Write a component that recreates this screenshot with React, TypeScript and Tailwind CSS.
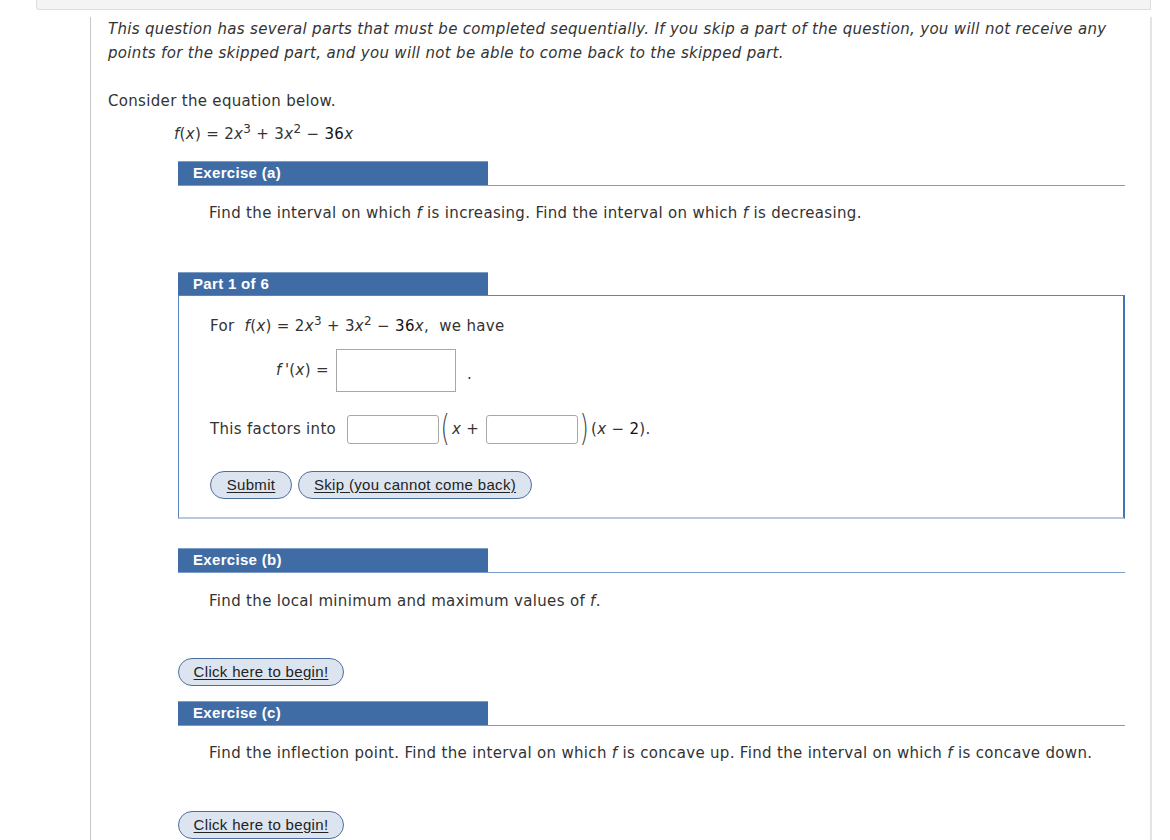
import type { ReactNode } from 'react';

const body = { fontFamily: '"DejaVu Sans", Verdana, sans-serif' };
const head = { fontFamily: '"Liberation Sans", Arial, sans-serif' };

function V({ children }: { children: ReactNode }) {
  return <i className="italic">{children}</i>;
}

function Sup({ children }: { children: ReactNode }) {
  return <sup className="text-[12px] relative -top-[6px]">{children}</sup>;
}

// f(x) = 2x^3 + 3x^2 − 36x
function Fx() {
  return (
    <span>
      <V>f</V>(<V>x</V>) = 2<V>x</V>
      <Sup>3</Sup> + 3<V>x</V>
      <Sup>2</Sup> − <span className="text-[#111]">36</span>
      <V>x</V>
    </span>
  );
}

function SectionBar({ title }: { title: string }) {
  return (
    <div className="flex items-end border-b border-[#7b9ccb]">
      <div
        className="w-[310px] h-[24px] bg-[#3f6ca5] border-t border-[#7d9cc6] text-white font-bold text-[15px] pl-[15px] leading-[22px]"
        style={head}
      >
        {title}
      </div>
    </div>
  );
}

function PillButton({ label, className = '' }: { label: string; className?: string }) {
  return (
    <button
      className={`h-[28px] rounded-full bg-[#dce5ef] border border-[#4d6f9d] text-[15px] text-[#222] underline underline-offset-2 ${className}`}
      style={head}
    >
      {label}
    </button>
  );
}

function Box({ className = '' }: { className?: string }) {
  return <span className={`inline-block bg-white border border-[#a8a8a8] ${className}`} />;
}

function Paren({ c }: { c: string }) {
  return (
    <span className="inline-block text-[32px] font-extralight leading-none -mt-[4px] scale-x-75 scale-y-110 text-[#444]">
      {c}
    </span>
  );
}

export default function App() {
  return (
    <div
      className="w-[1170px] h-[840px] bg-white overflow-hidden text-[#333] text-[15px] tracking-[0.32px]"
      style={body}
    >
      {/* top strip */}
      <div className="ml-[36px] w-[1115px] h-[10px] bg-[#f4f4f4] border-b border-l border-r border-[#dedede] rounded-bl-[3px]" />

      <div className="ml-[90px] w-[1062px] h-[830px] border-l border-[#c8c8c8] border-r-2 border-r-[#e4e4e4] pl-[17px]">
        <p className="italic leading-[24px] mt-[7px] whitespace-nowrap">
          This question has several parts that must be completed sequentially. If you skip a part of the question, you will not receive any
          <br />
          points for the skipped part, and you will not be able to come back to the skipped part.
        </p>

        <p className="mt-[24px] leading-[24px]">Consider the equation below.</p>
        <p className="mt-[9px] ml-[66px] leading-[24px]">
          <Fx />
        </p>

        <div className="ml-[70px] w-[947px]">
          {/* Exercise (a) */}
          <div className="mt-[15px]">
            <SectionBar title="Exercise (a)" />
          </div>
          <p className="mt-[15px] ml-[31px] leading-[24px]">
            Find the interval on which <V>f</V> is increasing. Find the interval on which <V>f</V> is decreasing.
          </p>

          {/* Part 1 */}
          <div className="mt-[47px]">
            <div
              className="w-[310px] h-[23px] bg-[#3f6ca5] border-t border-[#7d9cc6] text-white font-bold text-[15px] pl-[15px] leading-[22px]"
              style={head}
            >
              Part 1 of 6
            </div>
            <div className="h-[224px] border border-[#5a84bf] border-r-2 border-r-[#4574b5] border-b-2 border-b-[#b9c9dd] pl-[31px] pt-[18px]">
              <p className="leading-[24px]">
                For&nbsp; <Fx />,&nbsp; we have
              </p>
              <div className="flex items-center mt-[11px] ml-[66px]">
                <span>
                  <V>f</V>&thinsp;'(<V>x</V>) =
                </span>
                <Box className="ml-[7px] w-[120px] h-[43px]" />
                <span className="ml-[11px] mt-[8px]">.</span>
              </div>
              <div className="flex items-center mt-[23px]">
                <span>This factors into</span>
                <Box className="ml-[11px] w-[92px] h-[29px] rounded-[3px]" />
                <Paren c="(" />
                <span>
                  <V>x</V> +
                </span>
                <Box className="ml-[7px] w-[92px] h-[29px] rounded-[3px]" />
                <Paren c=")" />
                <span>
                  (<V>x</V> − <span className="text-[#111]">2</span>).
                </span>
              </div>
              <div className="flex mt-[27px] gap-[6px]">
                <PillButton label="Submit" className="w-[82px]" />
                <PillButton label="Skip (you cannot come back)" className="w-[234px]" />
              </div>
            </div>
          </div>

          {/* Exercise (b) */}
          <div className="mt-[29px]">
            <SectionBar title="Exercise (b)" />
          </div>
          <p className="mt-[16px] ml-[31px] leading-[24px]">
            Find the local minimum and maximum values of <V>f</V>.
          </p>
          <PillButton label="Click here to begin!" className="w-[166px] mt-[45px]" />

          {/* Exercise (c) */}
          <div className="mt-[15px]">
            <SectionBar title="Exercise (c)" />
          </div>
          <p className="mt-[15px] ml-[31px] leading-[24px]">
            Find the inflection point. Find the interval on which <V>f</V> is concave up. Find the interval on which <V>f</V> is concave
            down.
          </p>
          <PillButton label="Click here to begin!" className="w-[166px] mt-[46px]" />
        </div>
      </div>
    </div>
  );
}
